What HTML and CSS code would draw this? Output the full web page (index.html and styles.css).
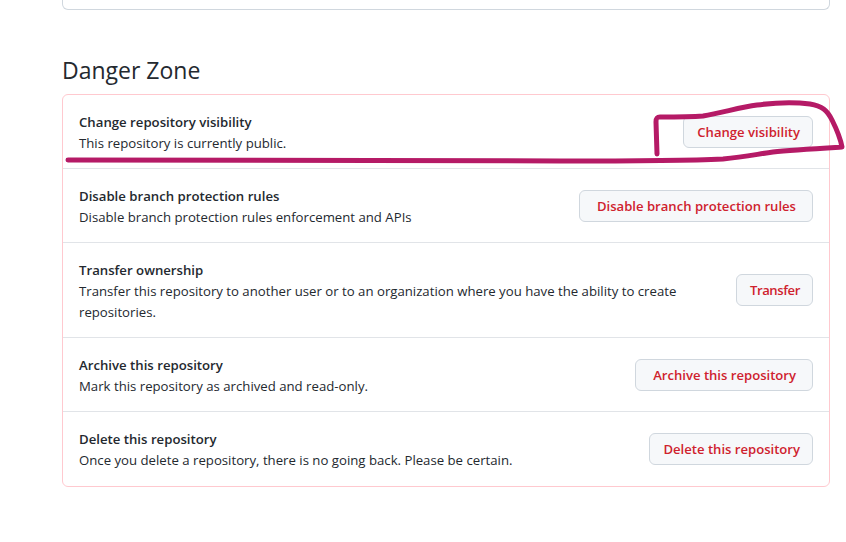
FILE: index.html
```html
<!DOCTYPE html>
<html lang="en">

<head>
    <meta charset="UTF-8">
    <title>Danger Zone</title>
    <link rel="stylesheet" href="styles.css">
</head>

<body>
    <div class="page">
        <div class="topbox"></div>
        <h2 class="title">Danger Zone</h2>
        <div class="dangerbox">
            <div class="row row1">
                <div class="info">
                    <strong>Change repository visibility</strong>
                    <p>This repository is currently public.</p>
                </div>
                <button class="btn">Change visibility</button>
            </div>
            <div class="row">
                <div class="info">
                    <strong>Disable branch protection rules</strong>
                    <p>Disable branch protection rules enforcement and APIs</p>
                </div>
                <button class="btn btn-wide">Disable branch protection rules</button>
            </div>
            <div class="row">
                <div class="info">
                    <strong>Transfer ownership</strong>
                    <p>Transfer this repository to another user or to an organization where you have the ability to create repositories.</p>
                </div>
                <button class="btn btn-tight">Transfer</button>
            </div>
            <div class="row">
                <div class="info">
                    <strong>Archive this repository</strong>
                    <p>Mark this repository as archived and read-only.</p>
                </div>
                <button class="btn btn-wide">Archive this repository</button>
            </div>
            <div class="row">
                <div class="info">
                    <strong>Delete this repository</strong>
                    <p>Once you delete a repository, there is no going back. Please be certain.</p>
                </div>
                <button class="btn">Delete this repository</button>
            </div>
        </div>
    </div>

    <!-- hand drawn marker over the first row -->
    <svg class="scribble" width="846" height="542" viewBox="0 0 846 542">
        <path d="M68 160 C200 161 400 160 560 161 C620 161 680 161 723 159 C745 157 758 154 773 152 C790 150 825 148 842 147 C840 136 836 128 832 120 C827 110 822 106 810 104 C795 102 772 103 757 105 C740 107 722 113 703 116 C690 117 670 117 660 117 C657 117 656 118 656 122 L657 154"></path>
    </svg>
</body>

</html>
```

FILE: styles.css
```css
* {
    box-sizing: border-box;
}

body {
    margin: 0;
    background-color: #fff;
    color: #24292f;
    font-family: "Open Sans", "Noto Sans", sans-serif;
    font-size: 13.2px;
    overflow: hidden;
}

.page {
    width: 768px;
    margin-left: 62px;
}

.topbox {
    height: 10px;
    border: 1px #d0d7de solid;
    border-top: 0;
    border-radius: 0 0 6px 6px;
}

.title {
    margin: 44px 0 8px;
    font-size: 23px;
    line-height: 32px;
    font-weight: 400;
}

.dangerbox {
    border: 1px #ffc9cf solid;
    border-radius: 6px;
}

.row {
    display: flex;
    align-items: center;
    justify-content: space-between;
    gap: 40px;
    height: 74px;
    padding: 0 16px;
    border-top: 1px #e1e4e8 solid;
}

.row1 {
    height: 73px;
    border-top: 0;
}

.row:nth-child(3) {
    height: 95px;
}

.row:last-child {
    height: 75px;
}

.row:last-child .info {
    margin-bottom: 1px;
}

.info {
    padding-top: 3px;
}

.info strong {
    display: block;
    font-weight: 600;
    line-height: 20px;
}

.info p {
    margin: 1px 0 0;
    line-height: 21px;
}

.btn {
    flex: none;
    height: 32px;
    padding: 0 12px 0 13px;
    border: 1px #d0d7de solid;
    border-radius: 6px;
    background-color: #f6f8fa;
    color: #cf222e;
    font-family: inherit;
    font-size: 13.1px;
    font-weight: 600;
}

.btn-wide {
    padding: 0 16px 0 17px;
}

.btn-tight {
    letter-spacing: -0.4px;
}

.scribble {
    position: absolute;
    top: 0;
    left: 0;
}

.scribble path {
    fill: none;
    stroke: #b51a66;
    stroke-width: 5;
    stroke-linecap: round;
    stroke-linejoin: round;
}
```
